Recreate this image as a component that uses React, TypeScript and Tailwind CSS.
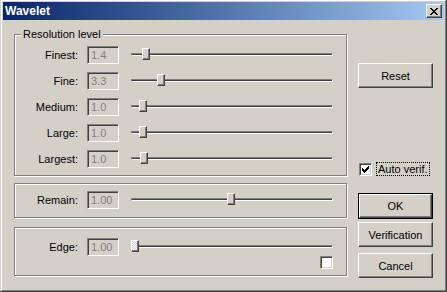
import React from "react";

const raised =
  "border border-t-white border-l-white border-b-[#404040] border-r-[#404040] shadow-[inset_-1px_-1px_0_#808080]";
const sunken =
  "border border-t-[#808080] border-l-[#808080] border-b-white border-r-white shadow-[inset_1px_1px_0_#404040,inset_-1px_-1px_0_#D4D0C8]";
const etched =
  "relative border border-[#808080] shadow-[inset_1px_1px_0_#fff,1px_1px_0_#fff]";

function Pixels({ rows, color = "#000" }: { rows: string[]; color?: string }) {
  const w = rows[0].length;
  const h = rows.length;
  const rects: React.ReactElement[] = [];
  rows.forEach((r, y) =>
    r.split("").forEach((c, x) => {
      if (c === "X") rects.push(<rect key={`${x}-${y}`} x={x} y={y} width={1} height={1} fill={color} />);
    })
  );
  return (
    <svg width={w} height={h} viewBox={`0 0 ${w} ${h}`} shapeRendering="crispEdges" className="block">
      {rects}
    </svg>
  );
}

const closeGlyph = ["XX....XX", ".XX..XX.", "..XXXX..", "...XX...", "..XXXX..", ".XX..XX.", "XX....XX"];
const checkGlyph = ["......X", ".....XX", "X...XXX", "XX.XXX.", "XXXXX..", ".XXX...", "..X...."];

function Slider({ pos, focused }: { pos: number; focused?: boolean }) {
  return (
    <div className="relative ml-[12px] w-[202px] h-[18px]">
      <div className="absolute left-0 right-0 top-[7px] h-[3px] bg-[#404040] border-t border-l border-t-[#808080] border-l-[#808080] border-b border-r border-b-white border-r-white" />
      <div
        className={`absolute top-[2px] w-[8px] h-[12px] ${raised} ${
          focused
            ? "bg-[repeating-conic-gradient(#ffffff_0%_25%,#D4D0C8_0%_50%)] bg-[length:2px_2px]"
            : "bg-[#D4D0C8]"
        }`}
        style={{ left: pos - 131 }}
      />
    </div>
  );
}

function Row({ label, value, pos, focused }: { label: string; value: string; pos: number; focused?: boolean }) {
  return (
    <div className="flex items-center h-[18px]">
      <div className="w-[63px] text-right leading-[14px]">{label}</div>
      <div className={`ml-[9px] w-[32px] h-[18px] ${sunken} bg-[#D4D0C8] text-[#808080] pl-[3px] flex items-center leading-[14px]`}>
        {value}
      </div>
      <Slider pos={pos} focused={focused} />
    </div>
  );
}

function Button({ children, def }: { children: React.ReactNode; def?: boolean }) {
  if (def) {
    return (
      <div className="w-[75px] h-[26px] border border-black">
        <div className={`w-full h-full ${raised} flex items-center justify-center leading-[14px]`}>{children}</div>
      </div>
    );
  }
  return (
    <div className={`w-[75px] h-[25px] ${raised} flex items-center justify-center leading-[14px]`}>{children}</div>
  );
}

function CheckBox({ checked }: { checked?: boolean }) {
  return (
    <div className={`w-[13px] h-[13px] bg-white ${sunken} shadow-[inset_1px_1px_0_#404040,inset_-1px_-1px_0_#D4D0C8] flex items-center justify-center`}>
      {checked && <Pixels rows={checkGlyph} />}
    </div>
  );
}

export default function App() {
  return (
    <div className="w-[447px] h-[292px] bg-[#D4D0C8] border-r border-b border-[#404040] pl-px overflow-hidden font-['Liberation_Sans',Arial,sans-serif] text-[11px] text-black">
      <div className="h-full border border-t-white border-l-white border-r-[#808080] border-b-[#808080] p-px flex flex-col">
        <div className="h-[18px] flex items-center bg-linear-to-r from-[#0A246A] to-[#A6CAF0] pl-[2px] shrink-0">
          <span className="text-white font-bold text-[12px] leading-[14px]">Wavelet</span>
          <div className={`ml-auto mr-[2px] w-[16px] h-[14px] bg-[#D4D0C8] ${raised} flex items-center justify-center`}>
            <Pixels rows={closeGlyph} />
          </div>
        </div>
        <div className="flex">
          <div className="pl-[11px] w-[345px] shrink-0">
            <div className={`mt-[14px] w-[333px] h-[142px] ${etched}`}>
              <div className="absolute left-[6px] top-[-8px] px-[2px] bg-[#D4D0C8] leading-[14px]">Resolution level</div>
              <div className="pt-[11px] flex flex-col gap-[8px]">
                <Row label="Finest:" value="1.4" pos={142} />
                <Row label="Fine:" value="3.3" pos={157} />
                <Row label="Medium:" value="1.0" pos={139} />
                <Row label="Large:" value="1.0" pos={139} />
                <Row label="Largest:" value="1.0" pos={140} />
              </div>
            </div>
            <div className={`mt-[7px] w-[333px] h-[35px] ${etched} pt-[7px]`}>
              <Row label="Remain:" value="1.00" pos={227} />
            </div>
            <div className={`mt-[9px] w-[333px] h-[49px] ${etched} pt-[10px]`}>
              <Row label="Edge:" value="1.00" pos={131} focused />
              <div className="flex justify-end mr-[13px]">
                <CheckBox />
              </div>
            </div>
          </div>
          <div className="ml-[10px] flex flex-col">
            <div className="mt-[43px]">
              <Button>Reset</Button>
            </div>
            <div className="mt-[74px] h-[14px] flex items-center">
              <div className="ml-px">
                <CheckBox checked />
              </div>
              <div className="ml-[4px] h-[14px] border border-dotted border-black px-[1px] flex items-center leading-[12px]">
                Auto verif.
              </div>
            </div>
            <div className="mt-[17px]">
              <Button def>OK</Button>
            </div>
            <div className="mt-[3px]">
              <Button>Verification</Button>
            </div>
            <div className="mt-[6px]">
              <Button>Cancel</Button>
            </div>
          </div>
        </div>
      </div>
    </div>
  );
}
